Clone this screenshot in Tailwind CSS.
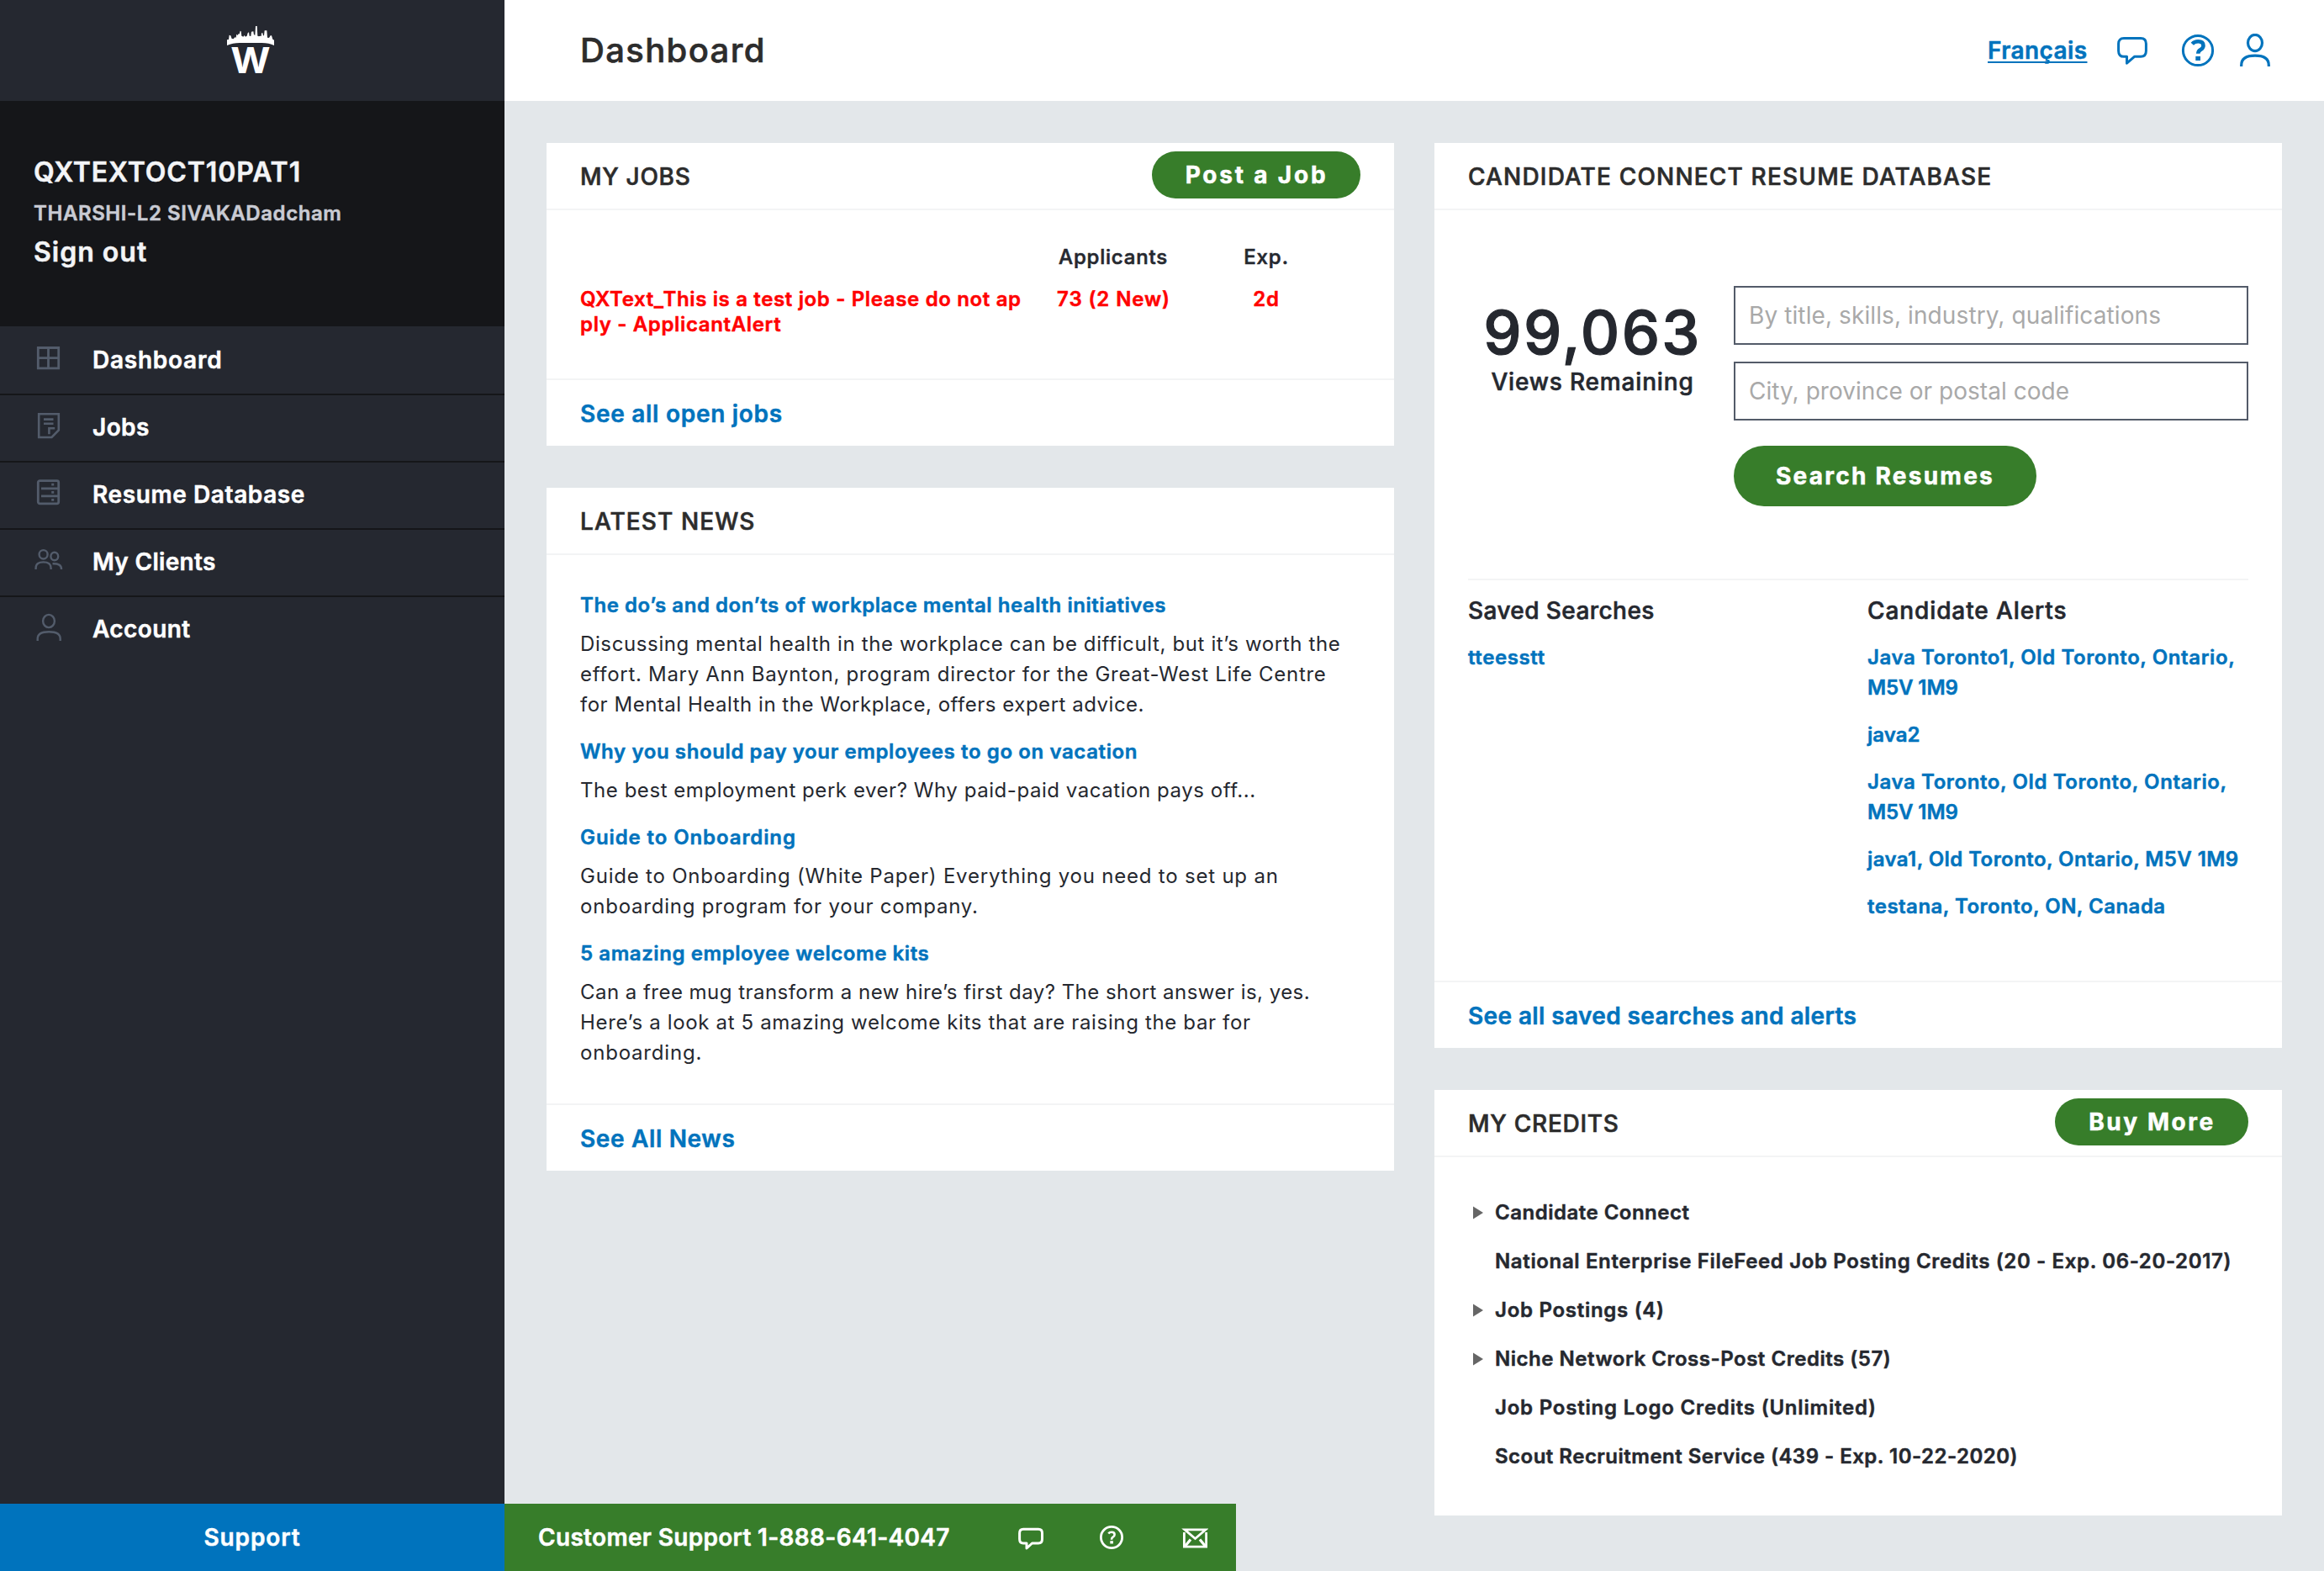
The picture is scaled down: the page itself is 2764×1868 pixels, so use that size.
<!DOCTYPE html>
<html lang="en">
<head>
<meta charset="utf-8">
<title>Dashboard</title>
<script src="https://cdn.jsdelivr.net/npm/@tailwindcss/browser@4"></script>
</head>
<body class="flex h-[1868px] w-[2764px] overflow-hidden bg-[#e3e7ea] font-['Inter',sans-serif] text-[24px] text-[#25282f] [&_.font-bold]:[-webkit-text-stroke:0.5px] [&_.font-medium]:[-webkit-text-stroke:0.6px] [&_.font-semibold]:[-webkit-text-stroke:0.5px]">

<aside class="flex w-[600px] shrink-0 flex-col bg-[#252830]">
  <div class="flex h-[120px] items-start justify-center pt-[30px]">
    <svg class="mr-1 h-[58px] w-[58px] overflow-visible" viewBox="87 60 174 174" fill="#fff">
      <path d="M90 132V112L96 111L98 95L103 97L107 108L113 109L118 103L122 104L124 92L128 96L132 89L134 92L137 80L140 82L142 98L148 101L152 96L156 101L161 98L164 88L168 85L170 98L175 99L177 83L184 82L186 94L190 95L192 63L197 63L199 98L204 100L208 98L212 99L213 88L217 88L219 97L222 97L224 79L232 79L234 104L240 105L245 97L249 97L253 110L258 113V132Q240 123 215 123H135Q110 123 90 132Z"/>
      <text x="103" y="230" font-size="126" font-weight="700" textLength="142" lengthAdjust="spacingAndGlyphs">W</text>
    </svg>
  </div>
  <div class="flex h-[268px] flex-col bg-[#151619] pl-10 pt-[65px] font-semibold text-[#f3f4f6]">
    <p class="h-[49px] text-[32px] leading-[40px] tracking-[0.9px]">QXTEXTOCT10PAT1</p>
    <p class="h-[46px] text-[24px] leading-[40px] tracking-[0.58px] text-[#c9cbd3]">THARSHI-L2 SIVAKADadcham</p>
    <p class="text-[32px] leading-[40px] tracking-[1px]">Sign out</p>
  </div>
  <nav class="flex flex-col text-[28px] font-semibold leading-[36px] text-white">
    <a class="flex h-[82px] items-center gap-[34px] border-b-2 border-[#151619] pl-10">
      <svg class="h-10 w-9" viewBox="0 0 36 40" fill="none" stroke="#535c6b" stroke-width="2.8"><path d="M5.3 5.5H29.7V29.8H5.3ZM17.5 5.5V29.8M5.3 17.7H29.7"/></svg>
      <span class="tracking-[0.75px]">Dashboard</span></a>
    <a class="flex h-20 items-center gap-[34px] border-b-2 border-[#151619] pb-[2px] pl-10">
      <svg class="h-10 w-9" viewBox="0 0 36 40" fill="none" stroke="#535c6b" stroke-width="2.6"><path d="M6.2 4.2H29.8V23.5L21.5 32H6.2ZM12 10.6H23.5M12 15.7H23.5M18.4 28.2V21.2H25.2"/></svg>
      <span class="tracking-[0.42px]">Jobs</span></a>
    <a class="flex h-20 items-center gap-[34px] border-b-2 border-[#151619] pb-[2px] pl-10">
      <svg class="h-10 w-9" viewBox="0 0 36 40" fill="none" stroke="#535c6b" stroke-width="2.8"><rect x="5.3" y="3.6" width="24.4" height="27.2" rx="2"/><path d="M9 12.8H29M9 21.8H29M21.2 8.2H24.2M21.2 17.3H24.2M21.2 26.4H24.2"/></svg>
      <span class="tracking-[0.6px]">Resume Database</span></a>
    <a class="flex h-20 items-center gap-[34px] border-b-2 border-[#151619] pb-[2px] pl-10">
      <svg class="h-10 w-9" viewBox="0 0 36 40" fill="none" stroke="#535c6b" stroke-width="2.4"><ellipse cx="11.6" cy="11.3" rx="5" ry="5.2"/><ellipse cx="24.8" cy="13.5" rx="4.4" ry="4.7"/><path d="M2.6 29V27.5C2.6 22.500 6 20.4 11.500 20.4S20.600 22.500 20.600 27.500V29M22.500 22.300C29.500 22 33 24 33 28.500V29"/></svg>
      <span class="tracking-[0.31px]">My Clients</span></a>
    <a class="flex h-20 items-center gap-[34px] pb-1 pl-10">
      <svg class="h-10 w-9" viewBox="0 0 36 40" fill="none" stroke="#535c6b" stroke-width="2.4"><ellipse cx="18" cy="10.500" rx="6.900" ry="7.600"/><path d="M4.700 34V31.500C4.700 26 9 23.300 18.200 23.300S31.700 26 31.700 31.500V34"/></svg>
      <span class="tracking-[0.4px]">Account</span></a>
  </nav>
</aside>

<div class="flex grow flex-col">
  <header class="flex h-[120px] items-center bg-white pl-[90px] pr-16">
    <h1 class="text-[40px] font-medium leading-[48px] tracking-[1.35px] text-[#2c2c2c]">Dashboard</h1>
    <a class="ml-auto w-[118px] whitespace-nowrap text-[28px] font-semibold tracking-[0.4px] text-[#0073bd] underline decoration-2 underline-offset-[3px] [text-decoration-skip-ink:none]">Français</a>
    <svg class="ml-9 h-10 w-9" viewBox="0 0 36 40" fill="none" stroke="#0073bd" stroke-width="3" stroke-linejoin="round"><path d="M8 5.600H28Q34.400 5.600 34.400 12V20.500Q34.400 27.300 28 27.300H20.500L11.500 35.200V27.300H8Q1.600 27.300 1.600 20.500V12Q1.600 5.600 8 5.600Z"/></svg>
    <svg class="ml-10 h-10 w-10" viewBox="0 0 40 40"><circle cx="20" cy="20" r="17.600" fill="none" stroke="#0073bd" stroke-width="3"/><path d="M13.300 12.200Q16 9.300 20.300 9.300Q26.500 9.300 26.500 14.300Q26.500 17.300 23.300 19Q20.300 20.700 20.300 23.700" fill="none" stroke="#0073bd" stroke-width="4.600"/><path d="M17.300 27H23V32H17.300Z" fill="#0073bd"/></svg>
    <svg class="ml-[30px] h-10 w-9" viewBox="0 0 36 40" fill="none" stroke="#0073bd" stroke-width="3.200"><ellipse cx="18" cy="11" rx="8.500" ry="9.600"/><path d="M1.700 39V37.500C1.700 29.500 8 26.200 18 26.200S34.300 29.500 34.300 37.500V39"/></svg>
  </header>

  <main class="flex items-start gap-12 pl-[50px] pt-[50px]">
    <div class="flex w-[1008px] flex-col gap-[50px]">

      <section class="bg-white">
        <div class="flex h-20 items-center justify-between border-b-2 border-[#f3f4f5] px-10">
          <h2 class="mt-[2px] text-[28px] font-medium tracking-[0.7px] text-[#2c2c2c]">MY JOBS</h2>
          <button class="-mt-[2px] h-14 w-[248px] whitespace-nowrap rounded-full bg-[#377d2a] pl-px text-[28px] font-bold tracking-[2.8px] text-white">Post a Job</button>
        </div>
        <div class="grid h-[200px] grid-cols-[528px_212px_152px] content-start gap-y-5 px-10 pt-[41px] leading-[30px]">
          <span></span>
          <span class="text-center font-medium tracking-[0.8px]">Applicants</span>
          <span class="text-center font-medium tracking-[0.94px]">Exp.</span>
          <a class="whitespace-nowrap font-semibold tracking-[0.65px] text-[#ff0000]">QXText_This is a test job - Please do not ap<br>ply - ApplicantAlert</a>
          <a class="pl-px text-center font-semibold tracking-[0.9px] text-[#ff0000]">73 (2 New)</a>
          <span class="text-center font-semibold tracking-[0.85px] text-[#ff0000]">2d</span>
        </div>
        <div class="flex h-20 items-center border-t-2 border-[#f3f4f5] px-10 pt-[2px] text-[28px] font-semibold text-[#0073bd]"><a class="tracking-[0.72px]">See all open jobs</a></div>
      </section>

      <section class="bg-white">
        <div class="flex h-20 items-center border-b-2 border-[#f3f4f5] px-10 pt-[2px]">
          <h2 class="text-[28px] font-medium tracking-[1.1px] text-[#2c2c2c]">LATEST NEWS</h2>
        </div>
        <div class="flex h-[652px] flex-col gap-5 whitespace-nowrap px-10 pt-[42px] leading-[36px]">
          <article class="flex flex-col gap-[10px]">
            <a class="font-semibold tracking-[0.55px] text-[#0073bd]">The do’s and don’ts of workplace mental health initiatives</a>
            <p><span class="tracking-[0.62px]">Discussing mental health in the workplace can be difficult, but it’s worth the</span><br><span class="tracking-[0.7px]">effort. Mary Ann Baynton, program director for the Great-West Life Centre</span><br><span class="tracking-[0.52px]">for Mental Health in the Workplace, offers expert advice.</span></p>
          </article>
          <article class="flex flex-col gap-[10px]">
            <a class="font-semibold tracking-[0.61px] text-[#0073bd]">Why you should pay your employees to go on vacation</a>
            <p class="tracking-[0.55px]">The best employment perk ever? Why paid-paid vacation pays off...</p>
          </article>
          <article class="flex flex-col gap-[10px]">
            <a class="font-semibold tracking-[0.9px] text-[#0073bd]">Guide to Onboarding</a>
            <p class="tracking-[0.79px]">Guide to Onboarding (White Paper) Everything you need to set up an<br>onboarding program for your company.</p>
          </article>
          <article class="flex flex-col gap-[10px]">
            <a class="font-semibold tracking-[0.58px] text-[#0073bd]">5 amazing employee welcome kits</a>
            <p><span class="tracking-[0.47px]">Can a free mug transform a new hire’s first day? The short answer is, yes.</span><br><span class="tracking-[0.65px]">Here’s a look at 5 amazing welcome kits that are raising the bar for</span><br><span class="tracking-[0.8px]">onboarding.</span></p>
          </article>
        </div>
        <div class="flex h-20 items-center border-t-2 border-[#f3f4f5] px-10 pt-[2px] text-[28px] font-semibold text-[#0073bd]"><a class="tracking-[0.65px]">See All News</a></div>
      </section>
    </div>

    <div class="flex w-[1008px] flex-col gap-[50px]">

      <section class="bg-white">
        <div class="flex h-20 items-center border-b-2 border-[#f3f4f5] px-10 pt-[2px]">
          <h2 class="text-[28px] font-medium tracking-[1.17px] text-[#2c2c2c]">CANDIDATE CONNECT RESUME DATABASE</h2>
        </div>
        <div class="flex h-[916px] flex-col px-10 pt-[90px]">
          <div class="flex gap-[22px]">
            <div class="flex w-[294px] flex-col pl-[2px] pt-[15px] text-center font-medium">
              <span class="text-[72px] leading-[79px] tracking-[2.3px] [-webkit-text-stroke:1.2px]">99,063</span>
              <span class="text-[28px] leading-[40px] tracking-[0.83px]">Views Remaining</span>
            </div>
            <div class="flex grow flex-col gap-5">
              <input class="h-[70px] border-2 border-[#535b69] bg-white px-4 text-[28px] tracking-[0.1px] placeholder:text-[#a9a9a9]" placeholder="By title, skills, industry, qualifications">
              <input class="h-[70px] border-2 border-[#535b69] bg-white px-4 text-[28px] tracking-[0.04px] placeholder:text-[#a9a9a9]" placeholder="City, province or postal code">
              <button class="mt-[10px] h-[72px] w-[360px] whitespace-nowrap rounded-full bg-[#377d2a] text-[28px] font-bold tracking-[2.25px] text-white">Search Resumes</button>
            </div>
          </div>
          <div class="mt-[86px] grid grid-cols-[475px_1fr] border-t-2 border-[#f3f4f5] pt-4 font-semibold leading-[36px] text-[#0073bd]">
            <div>
              <h3 class="text-[28px] font-medium leading-[40px] tracking-[0.42px] text-[#25282f]">Saved Searches</h3>
              <p class="pt-[18px] tracking-[0.6px]">tteesstt</p>
            </div>
            <div class="flex flex-col whitespace-nowrap">
              <h3 class="text-[28px] font-medium leading-[40px] tracking-[0.9px] text-[#25282f]">Candidate Alerts</h3>
              <div class="flex flex-col gap-5 pt-[18px]">
                <a><span class="tracking-[0.6px]">Java Toronto1, Old Toronto, Ontario,</span><br><span class="tracking-[-0.1px]">M5V 1M9</span></a>
                <a class="tracking-[0.05px]">java2</a>
                <a><span class="tracking-[0.61px]">Java Toronto, Old Toronto, Ontario,</span><br><span class="tracking-[-0.1px]">M5V 1M9</span></a>
                <a class="tracking-[0.43px]">java1, Old Toronto, Ontario, M5V 1M9</a>
                <a class="tracking-[0.48px]">testana, Toronto, ON, Canada</a>
              </div>
            </div>
          </div>
        </div>
        <div class="flex h-20 items-center border-t-2 border-[#f3f4f5] px-10 pt-[2px] text-[28px] font-semibold text-[#0073bd]"><a class="tracking-[0.38px]">See all saved searches and alerts</a></div>
      </section>

      <section class="bg-white">
        <div class="flex h-20 items-center justify-between border-b-2 border-[#f3f4f5] px-10">
          <h2 class="mt-[2px] text-[28px] font-medium tracking-[0.74px] text-[#2c2c2c]">MY CREDITS</h2>
          <button class="-mt-[2px] h-14 w-[230px] whitespace-nowrap rounded-full bg-[#377d2a] pl-px text-[28px] font-bold tracking-[2.55px] text-white">Buy More</button>
        </div>
        <ul class="h-[426px] whitespace-nowrap px-10 pt-[37px] font-semibold leading-[58px]">
          <li class="flex items-center"><svg class="mr-[14px] ml-1.5 h-4 w-3" viewBox="0 0 12 16" fill="#666"><path d="M0 .5L12 8L0 15.500Z"/></svg><span class="tracking-[0.5px]">Candidate Connect</span></li>
          <li class="pl-8 tracking-[0.64px]">National Enterprise FileFeed Job Posting Credits (20 - Exp. 06-20-2017)</li>
          <li class="flex items-center"><svg class="mr-[14px] ml-1.5 h-4 w-3" viewBox="0 0 12 16" fill="#666"><path d="M0 .5L12 8L0 15.500Z"/></svg><span class="tracking-[0.72px]">Job Postings (4)</span></li>
          <li class="flex items-center"><svg class="mr-[14px] ml-1.5 h-4 w-3" viewBox="0 0 12 16" fill="#666"><path d="M0 .5L12 8L0 15.500Z"/></svg><span class="tracking-[0.53px]">Niche Network Cross-Post Credits (57)</span></li>
          <li class="pl-8 tracking-[0.8px]">Job Posting Logo Credits (Unlimited)</li>
          <li class="pl-8 tracking-[0.49px]">Scout Recruitment Service (439 - Exp. 10-22-2020)</li>
        </ul>
      </section>
    </div>
  </main>
</div>

<!-- Support bar pinned over the page bottom -->
<div class="fixed bottom-0 left-0 flex h-20 text-[28px] font-semibold text-white">
  <div class="flex w-[600px] items-center justify-center bg-[#0073bd] tracking-[0.9px]">Support</div>
  <div class="flex w-[870px] items-center bg-[#377d2a] pl-10">
    <span class="w-[570px] whitespace-nowrap tracking-[0.32px]">Customer Support 1-888-641-4047</span>
    <svg class="h-8 w-[32px]" viewBox="0 0 32 32" fill="none" stroke="#fff" stroke-width="3" stroke-linejoin="round"><path d="M7 6.300H25Q29.500 6.300 29.500 11V18Q29.500 23 25 23H17.500L11 29V23H7Q2.600 23 2.600 18V11Q2.600 6.300 7 6.300Z"/></svg>
    <svg class="ml-16 h-8 w-8" viewBox="0 0 32 32"><circle cx="16" cy="16" r="12.600" fill="none" stroke="#fff" stroke-width="2.800"/><path d="M12.300 11.500Q13.500 9.800 16.200 9.800Q19.600 9.800 19.600 12.700Q19.600 14.500 17.600 15.600Q16 16.600 16 18.700" fill="none" stroke="#fff" stroke-width="2.600"/><path d="M14.300 20.200H17.900V23.500H14.300Z" fill="#fff"/></svg>
    <svg class="ml-[67px] h-8 w-8" viewBox="0 0 32 32" fill="none" stroke="#fff" stroke-width="2.800"><path d="M3.400 10V27.200H29.600V10M4 6.800H29L16.500 17.500Z"/><path d="M4.500 26.500L11 18.500M28.500 26.500L22 18.500" stroke-width="3.200"/></svg>
  </div>
</div>
</body>
</html>
